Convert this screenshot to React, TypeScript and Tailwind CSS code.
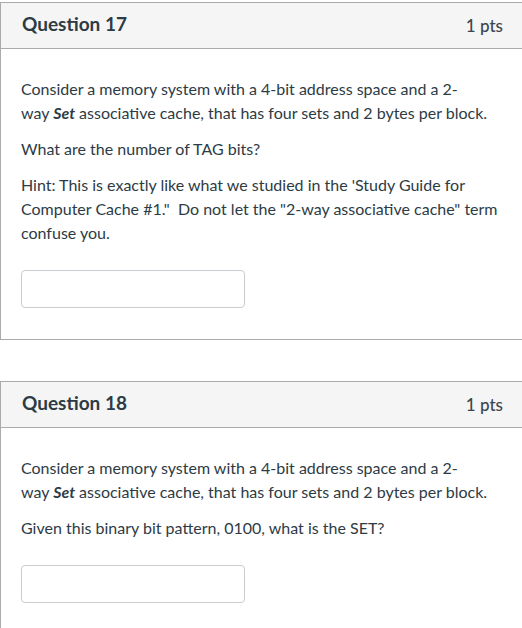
import React from 'react'

type Question = {
  number: number
  points: string
  paragraphs: React.ReactNode[]
}

const questions: Question[] = [
  {
    number: 17,
    points: '1 pts',
    paragraphs: [
      <>
        Consider a memory system with a 4-bit address space and a 2-
        <br />
        way <strong className="font-bold italic">Set</strong> associative cache, that has four sets and 2 bytes per block.
      </>,
      <>What are the number of TAG bits?</>,
      <>
        Hint: This is exactly like what we studied in the 'Study Guide for
        <br />
        Computer Cache #1."&nbsp; Do not let the "2-way associative cache" term
        <br />
        confuse you.
      </>,
    ],
  },
  {
    number: 18,
    points: '1 pts',
    paragraphs: [
      <>
        Consider a memory system with a 4-bit address space and a 2-
        <br />
        way <strong className="font-bold italic">Set</strong> associative cache, that has four sets and 2 bytes per block.
      </>,
      <>Given this binary bit pattern, 0100, what is the SET?</>,
    ],
  },
]

function QuestionCard({ q }: { q: Question }) {
  return (
    <div className="w-[530px] border border-[#ababab] bg-white">
      <div className="flex h-[46px] items-center justify-between border-b border-[#ababab] bg-[#f5f5f5] pb-[3px] pl-[21px] pr-[26px]">
        <h2 className="text-[19px] font-bold text-[#2d3b45]">Question {q.number}</h2>
        <span className="pt-[4px] text-[17px] font-medium text-[#3b4650]">{q.points}</span>
      </div>
      <div className="pb-[31px] pl-[20px] pr-[21px] pt-[28px]">
        <div className="flex flex-col gap-3 text-[16px] leading-6 text-[#2d3b45]">
          {q.paragraphs.map((p, i) => (
            <p key={i}>{p}</p>
          ))}
        </div>
        <input
          type="text"
          aria-label={`Answer for question ${q.number}`}
          className="mt-[25px] block h-[38px] w-[224px] rounded-[4px] border border-[#c7cdd1] bg-white px-2 outline-none"
        />
      </div>
    </div>
  )
}

export default function App() {
  return (
    <div className="h-[628px] w-[522px] overflow-hidden bg-white pt-[2px] font-['Lato',sans-serif]">
      <div className="flex flex-col gap-[41px]">
        {questions.map((q) => (
          <QuestionCard key={q.number} q={q} />
        ))}
      </div>
    </div>
  )
}
